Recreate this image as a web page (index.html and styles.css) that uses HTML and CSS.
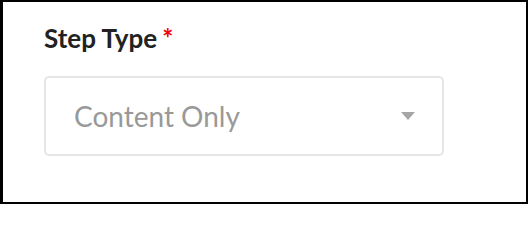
FILE: index.html
```html
<!DOCTYPE html>
<html>
<head>
<meta charset="utf-8">
<link rel="stylesheet" href="styles.css">
</head>
<body>
<div class="frame">
  <div class="field">
    <label class="label">Step Type<span class="req">*</span></label>
    <div class="select">
      <span class="value">Content Only</span>
      <svg class="caret" width="14" height="8" viewBox="0 0 14 8"><path d="M0 0H14L7 8Z" fill="#a6a6a6"/></svg>
    </div>
  </div>
</div>
</body>
</html>
```
FILE: styles.css
```css
html, body { margin: 0; padding: 0; background: #fff; }
body { width: 528px; font-family: Lato, "Open Sans", sans-serif; }
.frame {
  box-sizing: border-box;
  width: 528px;
  height: 204px;
  border-style: solid;
  border-color: #000;
  border-width: 2px 2px 2px 3px;
  background: #fff;
  padding: 21px 0 0 41px;
}
.field { display: flex; flex-direction: column; gap: 23px; }
.label {
  font-weight: 700;
  font-size: 26px;
  line-height: 30px;
  color: #222;
}
.req { color: #ee0000; margin-left: 5px; }
.select {
  box-sizing: border-box;
  width: 400px;
  height: 80px;
  border: 2px solid #e6e6e6;
  border-radius: 5px;
  display: flex;
  align-items: center;
  justify-content: space-between;
  padding: 0 27px 0 28px;
}
.value { font-size: 28px; color: #999; }
.caret { display: block; }
```
